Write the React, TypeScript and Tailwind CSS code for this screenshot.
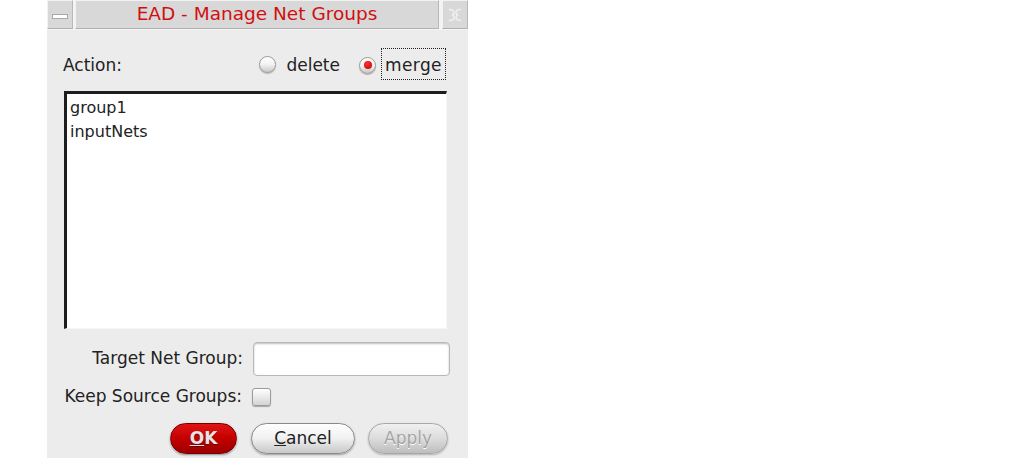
import React from "react";

const font = { fontFamily: '"DejaVu Sans", "Liberation Sans", sans-serif' };

function Radio({ checked }: { checked?: boolean }) {
  return (
    <span className="relative inline-flex h-[17px] w-[17px] items-center justify-center rounded-full border border-[#9a9a9a] bg-gradient-to-b from-[#ffffff] via-[#f2f2f2] to-[#c8c8c8] shadow-[0_1px_1px_rgba(0,0,0,0.25)]">
      {checked && <span className="h-[8px] w-[8px] rounded-full bg-[radial-gradient(circle_at_40%_35%,#ff3030,#c00000)]" />}
    </span>
  );
}

export default function App() {
  return (
    <div className="flex h-[458px] w-[1013px] bg-white pl-[47px]" style={font}>
      <div className="flex h-[458px] w-[421px] flex-col bg-[#ececec]">
        {/* Title bar */}
        <div className="flex h-[30px] gap-[2px] bg-[#f4f4f4]">
          <div className="flex h-[29px] w-[26px] items-center justify-center border border-t-[#f2f2f2] border-l-[#f2f2f2] border-r-[#b8b8b8] border-b-[#b0b0b0] bg-[#d8d8d8]">
            <span className="mt-[3px] h-[5px] w-[16px] border border-[#a8a8a8] bg-white" />
          </div>
          <div className="flex h-[29px] flex-1 items-center justify-center border border-t-[#f2f2f2] border-l-[#f2f2f2] border-r-[#b8b8b8] border-b-[#b0b0b0] bg-[#d8d8d8]">
            <span className="text-[18.5px] leading-none text-[#d01010]">EAD - Manage Net Groups</span>
          </div>
          <div className="ml-[1px] flex h-[29px] w-[26px] items-center justify-center border border-t-[#f2f2f2] border-l-[#f2f2f2] border-r-[#b8b8b8] border-b-[#b0b0b0] bg-[#d8d8d8]">
            <svg width="16" height="16" viewBox="0 0 16 16" fill="none" stroke="#efefef" strokeWidth="1.6" strokeLinecap="round">
              <path d="M2.5 2.5 Q7 2.5 7 5.5 Q7 7.5 5 8 Q7 8.5 7 10.5 Q7 13.5 2.5 13.5" />
              <path d="M13.5 2.5 Q9 2.5 9 5.5 Q9 7.5 11 8 Q9 8.5 9 10.5 Q9 13.5 13.5 13.5" />
            </svg>
          </div>
        </div>

        <div className="flex flex-col pl-[16px] pr-[18px]">
          {/* Action row */}
          <div className="mt-[18px] flex h-[32px] items-center">
            <span className="mt-[4px] text-[17px] text-[#222]">Action:</span>
            <div className="ml-auto mr-[4px] flex items-center">
              <Radio />
              <span className="ml-[10px] mt-[4px] text-[17px] text-[#222]">delete</span>
              <span className="ml-[19px]"><Radio checked /></span>
              <span className="ml-[5px] flex h-[32px] w-[65px] items-center justify-center border border-dotted border-[#222] pt-[4px] text-[17px] tracking-[0.4px] text-[#222]">merge</span>
            </div>
          </div>

          {/* List */}
          <div className="ml-[1px] mt-[11px] h-[238px] w-[383px] border-t-[3px] border-l-[3px] border-r border-b border-t-[#1e1e1e] border-l-[#1e1e1e] border-r-[#f6f6f6] border-b-[#f6f6f6] bg-white px-[3px] pt-[2px]">
            <div className="text-[16px] leading-[24px] text-[#222]">group1</div>
            <div className="text-[16px] leading-[24px] text-[#222]">inputNets</div>
          </div>

          {/* Target Net Group */}
          <div className="mt-[13px] flex h-[34px] items-center">
            <span className="w-[190px] pr-[10px] text-right text-[17px] text-[#222]">Target Net Group:</span>
            <div className="h-[34px] w-[197px] rounded-[4px] border border-[#b8b8b8] bg-white shadow-[inset_0_1px_2px_rgba(0,0,0,0.25)]" />
          </div>

          {/* Keep source groups */}
          <div className="mt-[12px] flex h-[18px] items-center">
            <span className="w-[189px] whitespace-nowrap pr-[10px] text-right text-[17px] text-[#222]">Keep Source Groups:</span>
            <span className="h-[18px] w-[19px] rounded-[3px] border border-[#9a9a9a] bg-gradient-to-b from-[#ffffff] to-[#d4d4d4] shadow-[0_1px_1px_rgba(0,0,0,0.3)]" />
          </div>

          {/* Buttons */}
          <div className="mt-[17px] flex h-[31px] items-center">
            <button className="ml-[107px] flex h-[31px] w-[67px] items-center justify-center rounded-full border border-[#7a0000] bg-gradient-to-b from-[#e01414] via-[#c40000] to-[#9c0000] text-[17px] font-bold text-[#e4e4e4] shadow-[0_1px_2px_rgba(0,0,0,0.4)] [text-shadow:0_1px_1px_rgba(0,0,0,0.4)]">
              <span><span className="underline">O</span>K</span>
            </button>
            <button className="ml-[14px] flex h-[31px] w-[104px] items-center justify-center rounded-full border border-[#8a8a8a] bg-gradient-to-b from-[#ffffff] via-[#f0f0f0] to-[#c8c8c8] text-[17px] text-[#222] shadow-[0_1px_2px_rgba(0,0,0,0.35)]">
              <span><span className="underline">C</span>ancel</span>
            </button>
            <button className="ml-[13px] flex h-[31px] w-[80px] items-center justify-center rounded-full border border-[#a8a8a8] bg-gradient-to-b from-[#f0f0f0] via-[#dcdcdc] to-[#bdbdbd] text-[17px] text-[#a4a4a4] shadow-[0_1px_2px_rgba(0,0,0,0.25)] [text-shadow:0_1px_0_#ffffff]">
              Apply
            </button>
          </div>
        </div>
      </div>
    </div>
  );
}
